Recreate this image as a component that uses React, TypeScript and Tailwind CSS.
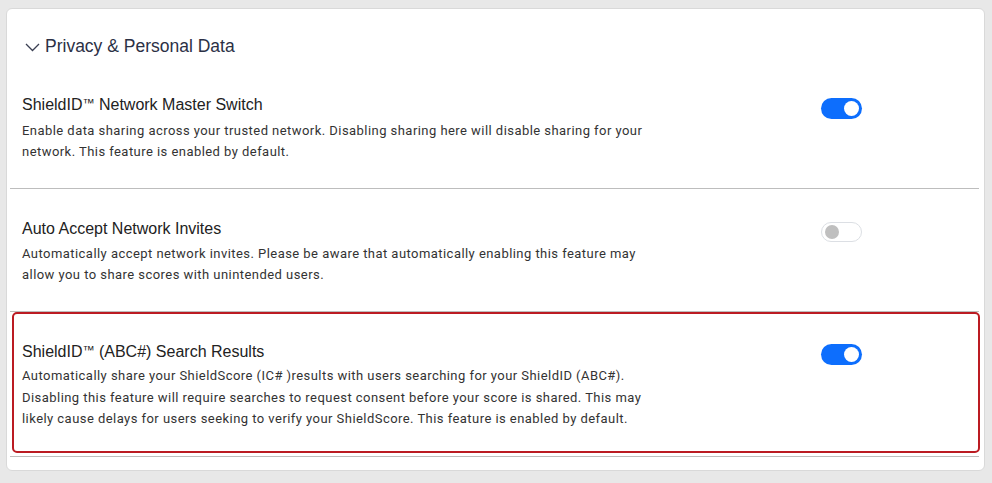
import React from "react";

function Toggle({ on }: { on: boolean }) {
  return on ? (
    <div className="w-[41px] h-[21px] rounded-full bg-[#0d6efd] flex items-center justify-end pr-[3px]">
      <div className="w-[15px] h-[15px] rounded-full bg-white" />
    </div>
  ) : (
    <div className="w-[41px] h-[20px] rounded-full bg-white border border-[#dcdfe4] flex items-center pl-[3px]">
      <div className="w-[14px] h-[14px] rounded-full bg-[#bfbfbf]" />
    </div>
  );
}

function TM() {
  return <span className="text-[12px] leading-[0] align-[3px]">™</span>;
}

function Row({
  title,
  desc,
  on,
  gap,
  tmt,
  lead,
}: {
  title: React.ReactNode;
  desc: string;
  on: boolean;
  gap: string;
  tmt: string;
  lead: string;
}) {
  return (
    <div className="flex items-start">
      <div className="w-[640px] pl-[12px]">
        <div className="h-[20px] text-[16px] leading-[20px] text-[#222222] font-['Liberation_Sans',Arial,sans-serif]">
          {title}
        </div>
        <div
          className={`${gap} ${lead} text-[13px] tracking-[0.45px] text-[#333333] font-['Roboto',sans-serif] w-[628px]`}
        >
          {desc}
        </div>
      </div>
      <div className={`ml-[171px] ${tmt}`}>
        <Toggle on={on} />
      </div>
    </div>
  );
}

export default function App() {
  return (
    <div className="w-[992px] h-[483px] bg-[#e8e8e8] pt-[8px] pl-[6px] pr-[7px]">
      <div className="h-[463px] bg-white rounded-[6px] border border-[#d9d9d9] pl-[3px] pr-[5px]">
        <div className="pt-[25px] pl-[15px] flex items-center">
          <svg width="15" height="10" viewBox="0 0 15 10" className="mr-[5px] mt-[2px]">
            <path d="M1 2 L7.5 8.5 L14 2" fill="none" stroke="#3a3f52" strokeWidth="1.3" />
          </svg>
          <span className="text-[17.5px] leading-[24px] text-[#2b3045] font-['Liberation_Sans',Arial,sans-serif]">
            Privacy &amp; Personal Data
          </span>
        </div>
        <div className="pt-[37px] pb-[26px] border-b border-[#bdbdbd]">
          <Row
            title={<>ShieldID<TM /> Network Master Switch</>}
            desc="Enable data sharing across your trusted network. Disabling sharing here will disable sharing for your network. This feature is enabled by default."
            on={true}
            gap="mt-[5px]"
            tmt="mt-[3px]"
            lead="leading-[21px]"
          />
        </div>
        <div className="pt-[30px] pb-[26px] border-b border-[#bdbdbd]">
          <Row
            title={<>Auto Accept Network Invites</>}
            desc="Automatically accept network invites. Please be aware that automatically enabling this feature may allow you to share scores with unintended users."
            on={false}
            gap="mt-[4px]"
            tmt="mt-[3px]"
            lead="leading-[21px]"
          />
        </div>
        <div className="pb-[3px] border-b border-[#bdbdbd]">
          <div className="ml-[2px] mr-[-1px] border-2 border-[#bb1b22] rounded-[5px] pt-[28px] pb-[21px]">
            <div className="-ml-[4px]">
              <Row
                title={<>ShieldID<TM /> (ABC#) Search Results</>}
                desc="Automatically share your ShieldScore (IC# )results with users searching for your ShieldID (ABC#). Disabling this feature will require searches to request consent before your score is shared. This may likely cause delays for users seeking to verify your ShieldScore. This feature is enabled by default."
                on={true}
                gap="mt-[3px]"
                tmt="mt-[2px]"
                lead="leading-[21.5px]"
              />
            </div>
          </div>
        </div>
      </div>
    </div>
  );
}
